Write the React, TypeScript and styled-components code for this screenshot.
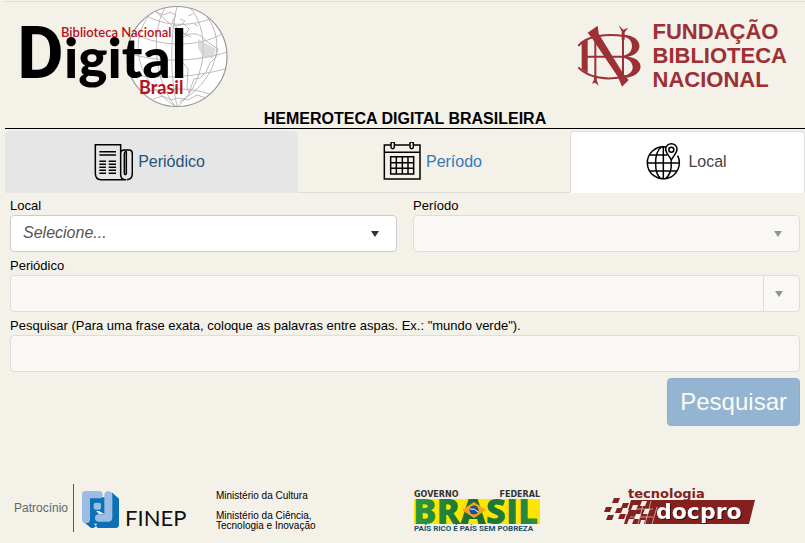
import React from "react";
import styled, { createGlobalStyle } from "styled-components";

const GlobalStyle = createGlobalStyle`
  *, *::before, *::after { box-sizing: border-box; }
  body {
    margin: 0;
    background: #f4f1e9;
    color: #000;
    font-family: "Liberation Sans", Arial, sans-serif;
    font-size: 13px;
    line-height: 20px;
  }
`;

const Page = styled.div`
  padding: 1px 0 0 5px;
`;

const Header = styled.header`
  display: flex;
  justify-content: space-between;
  align-items: flex-start;
  border-top: 1px solid #dddbd5;
  padding: 3px 18px 0 14px;
  height: 108px;
`;

const LogoLink = styled.a`
  display: flex;
  gap: 12px;
  color: #9d3034;
  text-decoration: none;
`;

const Foundation = styled.span`
  margin-top: 15px;
  font-size: 22px;
  line-height: 24px;
  font-weight: bold;
`;

const MonogramSvg = styled.svg`
  width: 64px;
  height: 63px;
  margin-top: 20px;
`;

const Title = styled.h1`
  margin: 0;
  border-bottom: 1px solid #000;
  font-size: 16px;
  line-height: 19px;
  text-align: center;
`;

const Tabs = styled.nav`
  display: grid;
  grid-template-columns: 293fr 272fr 235fr;
  margin-top: 2px;
`;

const Tab = styled.a<{ $state?: "hover" | "active" }>`
  display: flex;
  align-items: center;
  justify-content: center;
  gap: 5px;
  height: 62px;
  padding-right: 5px;
  font-size: 16px;
  text-decoration: none;
  border-radius: 4px 4px 0 0;
  border: 1px solid transparent;
  border-bottom-color: #ddd;
  color: #337ab7;
  ${({ $state }) =>
    $state === "hover" &&
    `background: #e6e6e6; border-color: #e6e6e6; color: #23527c;`}
  ${({ $state }) =>
    $state === "active" &&
    `background: #fff; border-color: #ddd; border-bottom-color: #fff; color: #444;`}
`;

const TabIcon = styled.svg`
  width: 40px;
  height: 40px;
  fill: none;
  stroke: #000;
`;

const Form = styled.form`
  display: grid;
  grid-template-columns: 1fr 1fr;
  column-gap: 16px;
  row-gap: 3px;
  padding: 2px 5px 0;
`;

const Field = styled.div<{ $wide?: boolean }>`
  grid-column: ${({ $wide }) => ($wide ? "1 / -1" : "auto")};
`;

const Label = styled.label`
  display: block;
  height: 20px;
  line-height: 22px;
`;

const Box = styled.div<{ $disabled?: boolean }>`
  display: flex;
  align-items: center;
  position: relative;
  height: 37px;
  border: 1px solid ${({ $disabled }) => ($disabled ? "#deded9" : "#ccc")};
  border-radius: 4px;
  background: ${({ $disabled }) => ($disabled ? "#f9f8f4" : "#fff")};
  overflow: hidden;
`;

const Select = styled.select`
  appearance: none;
  flex: 1;
  min-width: 0;
  height: 100%;
  border: 0;
  padding: 0 36px 2px 12px;
  background: transparent;
  color: #555;
  font: italic 16px "Liberation Sans", Arial, sans-serif;
`;

const TextInput = styled.input`
  flex: 1;
  min-width: 0;
  height: 100%;
  border: 0;
  padding: 0 13px;
  background: transparent;
  font: 16px "Liberation Sans", Arial, sans-serif;
`;

const DropButton = styled.button`
  width: 36px;
  height: 100%;
  padding: 0 6px 0 0;
  border: 0;
  border-left: 1px solid #deded9;
  background: transparent;
  display: flex;
  align-items: center;
  justify-content: center;
`;

const Arrow = styled.span<{ $muted?: boolean }>`
  border: 4px solid transparent;
  border-top: 6px solid ${({ $muted }) => ($muted ? "#92928f" : "#333")};
  border-bottom: 0;
`;

const SelectArrow = styled(Arrow)`
  position: absolute;
  right: 17px;
  pointer-events: none;
`;

const Actions = styled.div`
  grid-column: 1 / -1;
  display: flex;
  justify-content: flex-end;
  padding-top: 3px;
`;

const SubmitButton = styled.button`
  height: 48px;
  padding: 0 12px;
  border: 1px solid #8cafcc;
  border-radius: 4px;
  background: #94b5d1;
  color: #fbfaf6;
  font: 24px "Liberation Sans", Arial, sans-serif;
`;

const Footer = styled.footer`
  display: grid;
  grid-template-columns: 202fr 198fr 191fr 200fr;
  align-items: center;
  margin-top: 58px;
  padding-left: 9px;
`;

const Sponsor = styled.div`
  display: flex;
  align-items: center;
`;

const SponsorLabel = styled.span`
  padding-right: 5px;
  line-height: 48px;
  border-right: 1px solid #555;
  color: #666;
  font-size: 12px;
`;

const FinepMark = styled.svg`
  width: 37px;
  height: 37px;
  margin: 3px 6px 0 8px;
`;

const FinepName = styled.span`
  font: 400 22px/28px Lato, sans-serif;
  color: #111;
  margin-top: 20px;
`;

const Ministries = styled.div`
  font-size: 10px;
  line-height: 10px;
  padding-top: 6px;
  p { margin: 0 0 10px; }
  p:last-child { margin: 0; }
`;

const BrandSvg = styled.svg`
  display: block;
  overflow: visible;
`;

const ShadowedWordmark = styled.text`
  font: 700 22px "DejaVu Sans", sans-serif;
  fill: #fff;
  filter: drop-shadow(1px 1px 0 #3d0d0c);
`;

function DigitalLogo() {
  return (
    <BrandSvg width="212" height="104" viewBox="19 5 212 104" role="img" aria-label="Biblioteca Nacional Digital Brasil">
      <circle cx="177" cy="56.500" r="50" fill="#fff" stroke="#999" strokeWidth="1.2" />
      <g fill="none" stroke="#aaa" strokeWidth=".8">
        <path d="M147 16c18 10 42 11 63 3M133 33c28 15 66 14 89 1M128 53c30 10 70 9 99-1M131 75c31 4 64 2 94-6M142 92c22-4 48-5 68 2" />
        <path d="M165 8c-12 18-14 68 10 98M177 6c-7 29-7 71 0 100M190 8c18 18 21 69-12 98M207 17c20 25 9 65-28 85M148 17c-20 28-9 66 27 89" />
        <path d="M155 11l8 4 7-3 6 3-4 7 5 4 7-2 5 5-3 5-9-3-9-9-13-11M174 25l8 8 9 4M190 34c7-1 13 2 16 7l12 8-2 8-6 6-4 9-6 6-6 1-3 8-2 6-2-5 1-19-8-10-3-10 4-11z" />
        <path d="M153 99l10-3 8 4 7-2 10 2 9-5 9 3M180 19l5 2-3 3M194 24l4 2M188 16l5-2" />
      </g>
      <path d="M198 39l18 10-3 9-10-1-5-9z" fill="#ccc" opacity=".7" />
      <text x="17" y="78" fontFamily="Roboto, sans-serif" fontWeight="700" fontSize="72">D</text>
      <text x="64" y="78" fontFamily="Lato, sans-serif" fontWeight="900" fontSize="55">
        igita<tspan fontSize="67" fontWeight="700">l</tspan>
      </text>
      <g fill="#b5121b" fontFamily="Lato, sans-serif" fontWeight="600">
        <text x="61" y="37" fontSize="13">Biblioteca Nacional</text>
        <text x="139" y="94" fontSize="18" fontWeight="700">Brasil</text>
      </g>
    </BrandSvg>
  );
}

function Monogram() {
  return (
    <MonogramSvg viewBox="6 9 192 189" aria-hidden="true">
      <g fill="none" stroke="#9d3034" strokeWidth="6">
        <path d="M10 72C34 40 100 34 150 43" />
        <path d="M10 136C40 168 98 177 155 162" />
        <path d="M34 104H160M61 45V175M144 28V166" />
      </g>
      <g fill="#9d3034">
        <path d="M20 64l18-12v102l-18-12z" />
        <path d="M38 32l30-21 3 24 76 124 14 15-20 20-12-29L50 47z" />
        <path d="M131 10l14 13 15-6-11 14v22h-9V28zM57 162h8v12l6 17-11-9-9 3 6-12z" />
        <path d="M146 38c60 3 62 58 12 66 56 6 50 60-10 64l-4-7c38-3 38-44 4-53v-8c31-6 31-52-2-56z" />
      </g>
    </MonogramSvg>
  );
}

function NewspaperIcon() {
  return (
    <TabIcon viewBox="279 66 120 120" strokeWidth="4.500" aria-hidden="true">
      <path d="M286 74H362V164Q362 179 378 179H303Q286 179 286 160Z" />
      <path d="M362 97Q364 90 372 90H388Q397 91 397 102V160Q397 179 380 179M379 94V160Q378 167 373 161V100Q374 94 379 94" />
      <path d="M298 95H348M298 105H348" />
      <path d="M298 124H318M298 133H318M298 142H318M298 151H318M298 160H318M326 124H348M326 133H348M326 142H348M326 151H348M326 160H348" />
    </TabIcon>
  );
}

function CalendarIcon() {
  return (
    <TabIcon viewBox="272 68 120 120" strokeWidth="4.500" aria-hidden="true">
      <path d="M302 77H282V179H389V77H370M313 77H358M282 99H389" />
      <rect x="302" y="68" width="10" height="20" rx="5" />
      <rect x="359" y="68" width="10" height="20" rx="5" />
      <path d="M301 112H370V164H301ZM301 130H370M301 147H370M318 112V164M336 112V164M353 112V164" />
    </TabIcon>
  );
}

function GlobePinIcon() {
  return (
    <TabIcon viewBox="250 67 120 120" strokeWidth="4.500" aria-hidden="true">
      <path d="M319 82A48 48 0 1 0 354 108M311 82V179M263 130H360M271 106H323M271 154H352M305 82C282 99 282 162 305 178M317 178C332 165 337 147 334 125" />
      <path d="M335 122C331 110 318 101 318 89A17 17 0 0 1 352 89C352 101 339 110 335 122Z" />
      <circle cx="335" cy="90" r="7.500" />
    </TabIcon>
  );
}

function FinepIcon() {
  return (
    <FinepMark viewBox="15 15 111 111" aria-hidden="true">
      <path d="M36 34H84L106 20 126 38V117Q125 126 116 126H62L57 120 50 126H42L20 108Z" fill="#0b70b5" />
      <path d="M23 15H66Q77 16 77 26 77 37 66 37H39V103Q38 112 27 112 16 112 15 102V24Q16 15 23 15Z" fill="#9bbce3" />
      <path d="M82 27Q82 16 94 16 106 16 106 28V96Q105 107 94 107H64Q54 106 54 96 54 85 65 85H82Z" fill="#9bbce3" />
      <rect x="50" y="50" width="22" height="21" rx="6" fill="#9bbce3" />
      <path d="M57 75H66L82 84H66ZM50 113H60L57 119Z" fill="#f4f1e9" />
    </FinepMark>
  );
}

function BrasilLogo() {
  return (
    <BrandSvg width="128" height="42" viewBox="414 487 128 42" role="img" aria-label="Governo Federal Brasil">
      <defs>
        <linearGradient id="brasilGreen" x1="0" y1="0" x2="1" y2="0">
          <stop offset="0" stopColor="#2e9a3e" />
          <stop offset=".5" stopColor="#176b35" />
          <stop offset="1" stopColor="#2b9140" />
        </linearGradient>
      </defs>
      <g fontFamily="DejaVu Sans, sans-serif" fontWeight="700" fontSize="8" fill="#333">
        <text x="414" y="497">GOVERNO</text>
        <text x="540" y="497" textAnchor="end">FEDERAL</text>
      </g>
      <path d="M414 499H540V524H414Z" fill="#ffe600" />
      <text x="413" y="524" fontFamily="Open Sans, sans-serif" fontWeight="800" fontSize="35" fill="url(#brasilGreen)">BRASIL</text>
      <path d="M462 510l12-8 12 8-12 8z" fill="#f9a21b" />
      <circle cx="474" cy="510" r="4.500" fill="#1d4f9b" />
      <path d="M470 509q5-1 8 3" stroke="#fff" fill="none" />
      <text x="414" y="531" fontFamily="Roboto, sans-serif" fontWeight="700" fontSize="8" fill="#14506b">PAÍS RICO É PAÍS SEM POBREZA</text>
    </BrandSvg>
  );
}

function DocproLogo() {
  return (
    <BrandSvg width="152" height="40" viewBox="605 488 152 40" role="img" aria-label="Tecnologia docpro">
      <text x="628" y="498" fontFamily="DejaVu Sans, sans-serif" fontWeight="700" fontSize="13" fill="#84211e">tecnologia</text>
      <path d="M631 500H755L749 524H624Z" fill="#84211e" />
      <g fill="#f4f1e9">
        <path d="M633 505h5l-2 5h-5zM642 501h5l-2 5h-5zM636 514h5l-2 5h-5zM645 509h5l-2 5h-5zM624 510h5l-2 5h-5zM629 519h5l-2 5h-5zM641 520h4l-1 4h-4z" />
        <path d="M651 501l-6 23M644 501l-6 23M657 507l-5 17M633 509h20M630 517h23" stroke="#f4f1e9" strokeWidth=".6" />
      </g>
      <path d="M614 498h6l-2 5h-6zM623 503h6l-2 5h-6zM606 507h6l-2 5h-6zM617 508h6l-2 5h-6zM608 515h6l-2 5h-6zM620 514h6l-2 5h-6z" fill="#84211e" />
      <ShadowedWordmark x="656" y="519">docpro</ShadowedWordmark>
    </BrandSvg>
  );
}

export default function App() {
  return (
    <>
      <GlobalStyle />
      <Page>
        <Header>
          <LogoLink href="#digital"><DigitalLogo /></LogoLink>
          <LogoLink href="#fundacao">
            <Monogram />
            <Foundation>FUNDAÇÃO<br />BIBLIOTECA<br />NACIONAL</Foundation>
          </LogoLink>
        </Header>
        <Title>HEMEROTECA DIGITAL BRASILEIRA</Title>
        <Tabs>
          <Tab href="#periodico" $state="hover"><NewspaperIcon />Periódico</Tab>
          <Tab href="#periodo"><CalendarIcon />Período</Tab>
          <Tab href="#local" $state="active" aria-current="page"><GlobePinIcon />Local</Tab>
        </Tabs>
        <Form onSubmit={(e) => e.preventDefault()}>
          <Field>
            <Label htmlFor="local-select">Local</Label>
            <Box>
              <Select id="local-select"><option>Selecione...</option></Select>
              <SelectArrow />
            </Box>
          </Field>
          <Field>
            <Label htmlFor="periodo-select">Período</Label>
            <Box $disabled>
              <Select id="periodo-select" disabled />
              <SelectArrow $muted />
            </Box>
          </Field>
          <Field $wide>
            <Label htmlFor="periodico-input">Periódico</Label>
            <Box $disabled>
              <TextInput id="periodico-input" disabled />
              <DropButton type="button" disabled aria-label="Abrir lista de periódicos"><Arrow $muted /></DropButton>
            </Box>
          </Field>
          <Field $wide>
            <Label htmlFor="pesquisa">Pesquisar (Para uma frase exata, coloque as palavras entre aspas. Ex.: "mundo verde").</Label>
            <Box $disabled><TextInput id="pesquisa" disabled /></Box>
          </Field>
          <Actions><SubmitButton disabled>Pesquisar</SubmitButton></Actions>
        </Form>
        <Footer>
          <Sponsor>
            <SponsorLabel>Patrocínio</SponsorLabel>
            <FinepIcon />
            <FinepName>FINEP</FinepName>
          </Sponsor>
          <Ministries>
            <p>Ministério da Cultura</p>
            <p>Ministério da Ciência,<br />Tecnologia e Inovação</p>
          </Ministries>
          <BrasilLogo />
          <DocproLogo />
        </Footer>
      </Page>
    </>
  );
}
